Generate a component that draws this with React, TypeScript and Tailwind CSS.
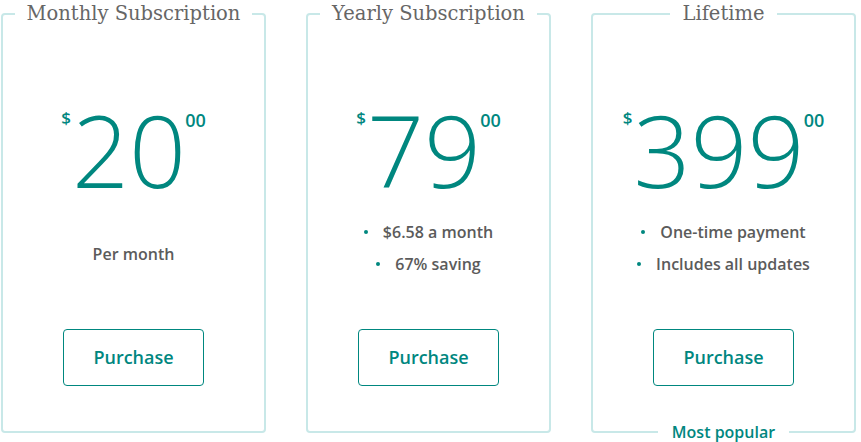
import React from "react";

const TEAL = "text-[#00877f]";

function Price({ value }: { value: string }) {
  return (
    <div className="flex items-start justify-center h-[100px]">
      <span
        className={`${TEAL} text-[17px] font-semibold leading-none mt-[10px] mr-[1px]`}
        style={{ fontFamily: "'Open Sans', sans-serif" }}
      >
        $
      </span>
      <span
        className={`${TEAL} text-[100px] font-light leading-none`}
        style={{ fontFamily: "'Open Sans', sans-serif" }}
      >
        {value}
      </span>
      <span
        className={`${TEAL} text-[18px] font-semibold leading-none mt-[12px] ml-[-1px]`}
        style={{ fontFamily: "'Open Sans', sans-serif" }}
      >
        00
      </span>
    </div>
  );
}

function Bullet({ children }: { children: React.ReactNode }) {
  return (
    <li className="flex items-center justify-center h-[32px] gap-[15px]">
      <span className="w-[4px] h-[4px] rounded-full bg-[#00877f]" />
      <span>{children}</span>
    </li>
  );
}

function Card({
  title,
  value,
  width,
  children,
  popular,
  padTop,
}: {
  title: string;
  value: string;
  width: string;
  children: React.ReactNode;
  popular?: boolean;
  padTop: string;
}) {
  return (
    <fieldset
      className={`relative ${width} h-[433px] border-2 border-[#c8e8e8] rounded-[4px] flex flex-col`}
    >
      <legend
        className="mx-auto px-[12px] text-[19.5px] leading-[28px] text-[#666666]"
        style={{ fontFamily: "'DejaVu Serif', serif" }}
      >
        {title}
      </legend>
      <div className="mt-[71px]">
        <Price value={value} />
      </div>
      <div
        className={`h-[130px] ${padTop} text-[16px] font-semibold text-[#5b5b5b] text-center`}
        style={{ fontFamily: "'Open Sans', sans-serif" }}
      >
        {children}
      </div>
      <div className="flex justify-center">
        <button
          className={`w-[141px] h-[57px] border border-[#00877f] rounded-[4px] ${TEAL} text-[18px] font-semibold bg-white`}
          style={{ fontFamily: "'Open Sans', sans-serif" }}
        >
          Purchase
        </button>
      </div>
      {popular && (
        <div className="absolute left-0 right-0 bottom-[-1px] flex justify-center">
          <span
            className={`translate-y-1/2 bg-white px-[14px] ${TEAL} text-[16px] font-semibold leading-[18px]`}
            style={{ fontFamily: "'Open Sans', sans-serif" }}
          >
            Most popular
          </span>
        </div>
      )}
    </fieldset>
  );
}

export default function App() {
  return (
    <div className="w-[861px] h-[442px] bg-white flex gap-[40px] pl-[1px] overflow-hidden">
      <Card title="Monthly Subscription" value="20" width="w-[265px]" padTop="pt-[39px]">
        <div className="leading-[32px]">Per month</div>
      </Card>
      <Card title="Yearly Subscription" value="79" width="w-[245px]" padTop="pt-[17px]">
        <ul>
          <Bullet>$6.58 a month</Bullet>
          <Bullet>67% saving</Bullet>
        </ul>
      </Card>
      <Card title="Lifetime" value="399" width="w-[265px]" padTop="pt-[17px]" popular>
        <ul>
          <Bullet>One-time payment</Bullet>
          <Bullet>Includes all updates</Bullet>
        </ul>
      </Card>
    </div>
  );
}
